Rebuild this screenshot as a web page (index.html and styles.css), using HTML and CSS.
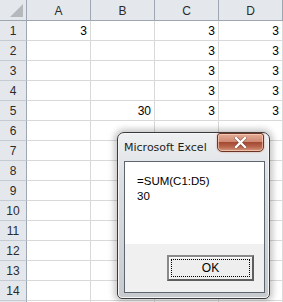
FILE: index.html
```html
<!DOCTYPE html>
<html lang="en">

<head>
    <meta charset="UTF-8">
    <title>Microsoft Excel</title>
    <link rel="stylesheet" href="styles.css">
</head>

<body>
    <div class="sheet">
        <div class="corner"><span class="tri"></span></div>
        <div class="col-head">A</div>
        <div class="col-head">B</div>
        <div class="col-head">C</div>
        <div class="col-head">D</div>

        <div class="row-head">1</div><div class="cell">3</div><div class="cell"></div><div class="cell">3</div><div class="cell">3</div>
        <div class="row-head">2</div><div class="cell"></div><div class="cell"></div><div class="cell">3</div><div class="cell">3</div>
        <div class="row-head">3</div><div class="cell"></div><div class="cell"></div><div class="cell">3</div><div class="cell">3</div>
        <div class="row-head">4</div><div class="cell"></div><div class="cell"></div><div class="cell">3</div><div class="cell">3</div>
        <div class="row-head">5</div><div class="cell"></div><div class="cell">30</div><div class="cell">3</div><div class="cell">3</div>
        <div class="row-head">6</div><div class="cell"></div><div class="cell"></div><div class="cell"></div><div class="cell"></div>
        <div class="row-head">7</div><div class="cell"></div><div class="cell"></div><div class="cell"></div><div class="cell"></div>
        <div class="row-head">8</div><div class="cell"></div><div class="cell"></div><div class="cell"></div><div class="cell"></div>
        <div class="row-head">9</div><div class="cell"></div><div class="cell"></div><div class="cell"></div><div class="cell"></div>
        <div class="row-head">10</div><div class="cell"></div><div class="cell"></div><div class="cell"></div><div class="cell"></div>
        <div class="row-head">11</div><div class="cell"></div><div class="cell"></div><div class="cell"></div><div class="cell"></div>
        <div class="row-head">12</div><div class="cell"></div><div class="cell"></div><div class="cell"></div><div class="cell"></div>
        <div class="row-head">13</div><div class="cell"></div><div class="cell"></div><div class="cell"></div><div class="cell"></div>
        <div class="row-head">14</div><div class="cell"></div><div class="cell"></div><div class="cell"></div><div class="cell"></div>
        <div class="row-head"></div><div class="cell"></div><div class="cell"></div><div class="cell"></div><div class="cell"></div>
    </div>

    <div class="dialog">
        <div class="titlebar">
            <span class="title">Microsoft Excel</span>
            <button class="close">
                <svg width="13" height="11" viewBox="0 0 13 11">
                    <path d="M2 1 L11 10 M11 1 L2 10" stroke="#5a2a1e" stroke-width="3.6" stroke-linecap="square" opacity="0.55"/>
                    <path d="M2 1 L11 10 M11 1 L2 10" stroke="#ffffff" stroke-width="2.4" stroke-linecap="square"/>
                </svg>
            </button>
        </div>
        <div class="client">
            <div class="message">
                <p>=SUM(C1:D5)</p>
                <p>30</p>
            </div>
            <div class="buttons">
                <button class="ok"><span>OK</span></button>
            </div>
        </div>
    </div>
</body>

</html>
```

FILE: styles.css
```css
body {
    margin: 0;
    width: 283px;
    height: 302px;
    overflow: hidden;
    position: relative;
    font-family: "Liberation Sans", Arial, sans-serif;
    background: #ffffff;
}

.sheet {
    display: grid;
    grid-template-columns: 27px repeat(4, 64px);
    grid-template-rows: 21px;
    grid-auto-rows: 20px;
}

.corner,
.col-head,
.row-head {
    background: #e4e8ed;
    color: #2b2b2b;
    font-size: 12px;
    display: flex;
    align-items: center;
    justify-content: center;
    box-sizing: border-box;
}

.corner {
    position: relative;
    border-right: 1px solid #9ea7b1;
    border-bottom: 1px solid #9ea7b1;
}

.corner .tri {
    position: absolute;
    right: 3px;
    bottom: 3px;
    width: 0;
    height: 0;
    border-left: 13px solid transparent;
    border-bottom: 13px solid #b5b9be;
}

.col-head {
    border-right: 1px solid #9ea7b1;
    border-bottom: 1px solid #9ea7b1;
    padding-top: 1px;
}

.row-head {
    border-right: 1px solid #9ea7b1;
    border-bottom: 1px solid #c5cbd2;
}

.cell {
    box-sizing: border-box;
    border-right: 1px solid #d9d9d9;
    border-bottom: 1px solid #d9d9d9;
    font-size: 12px;
    color: #000000;
    text-align: right;
    padding: 3px 3px 0 0;
}

.dialog {
    position: absolute;
    left: 117px;
    top: 132px;
    width: 153px;
    height: 167px;
    box-sizing: border-box;
    border: 1px solid #3a3a3a;
    border-radius: 7px 7px 5px 5px;
    background: linear-gradient(to bottom, #eef0f2 0%, #dcdfe2 30%, #c8cbce 100%);
    box-shadow: 0 0 6px 3px rgba(0, 0, 0, 0.22), inset 0 0 0 1px #f6f6f6;
    display: flex;
    flex-direction: column;
    padding: 0 4px 5px 6px;
}

.titlebar {
    height: 28px;
    position: relative;
    flex-shrink: 0;
}

.title {
    display: block;
    padding-top: 8px;
    font-family: "DejaVu Sans", "Liberation Sans", sans-serif;
    font-size: 11px;
    color: #1e1e1e;
}

.close {
    position: absolute;
    right: 1px;
    top: 0;
    width: 47px;
    height: 19px;
    padding: 0;
    border: 1px solid #6b3424;
    border-radius: 3px 3px 5px 5px;
    background: linear-gradient(to bottom, #e4ab96 0%, #cf8a73 45%, #a44a33 50%, #b9644c 75%, #d59a80 100%);
    box-shadow: inset 0 0 0 1px rgba(255, 220, 200, 0.6), 0 0 2px rgba(190, 90, 60, 0.5);
    display: flex;
    align-items: center;
    justify-content: center;
}

.client {
    flex: 1;
    border: 1px solid #5d6670;
    background: #f0f0f0;
    display: flex;
    flex-direction: column;
}

.message {
    height: 82px;
    background: #ffffff;
    padding: 12px 0 0 12px;
    box-sizing: border-box;
    font-family: "Liberation Sans", Arial, sans-serif;
    font-size: 11.5px;
    color: #000000;
}

.message p {
    margin: 0;
    line-height: 15px;
}

.buttons {
    display: flex;
    justify-content: flex-end;
    padding: 11px 10px 0 0;
}

.ok {
    width: 87px;
    height: 26px;
    padding: 2px;
    box-sizing: border-box;
    border: 2px solid #6f6f6f;
    border-color: #8a8a8a #5e5e5e #5e5e5e #8a8a8a;
    background: #eeeeee;
    box-shadow: inset 1px 1px 0 #ffffff;
    font-family: "Liberation Sans", Arial, sans-serif;
    font-size: 12px;
    color: #000000;
}

.ok span {
    display: flex;
    align-items: center;
    justify-content: center;
    height: 100%;
    border: 1px dotted #000000;
    box-sizing: border-box;
}
```
